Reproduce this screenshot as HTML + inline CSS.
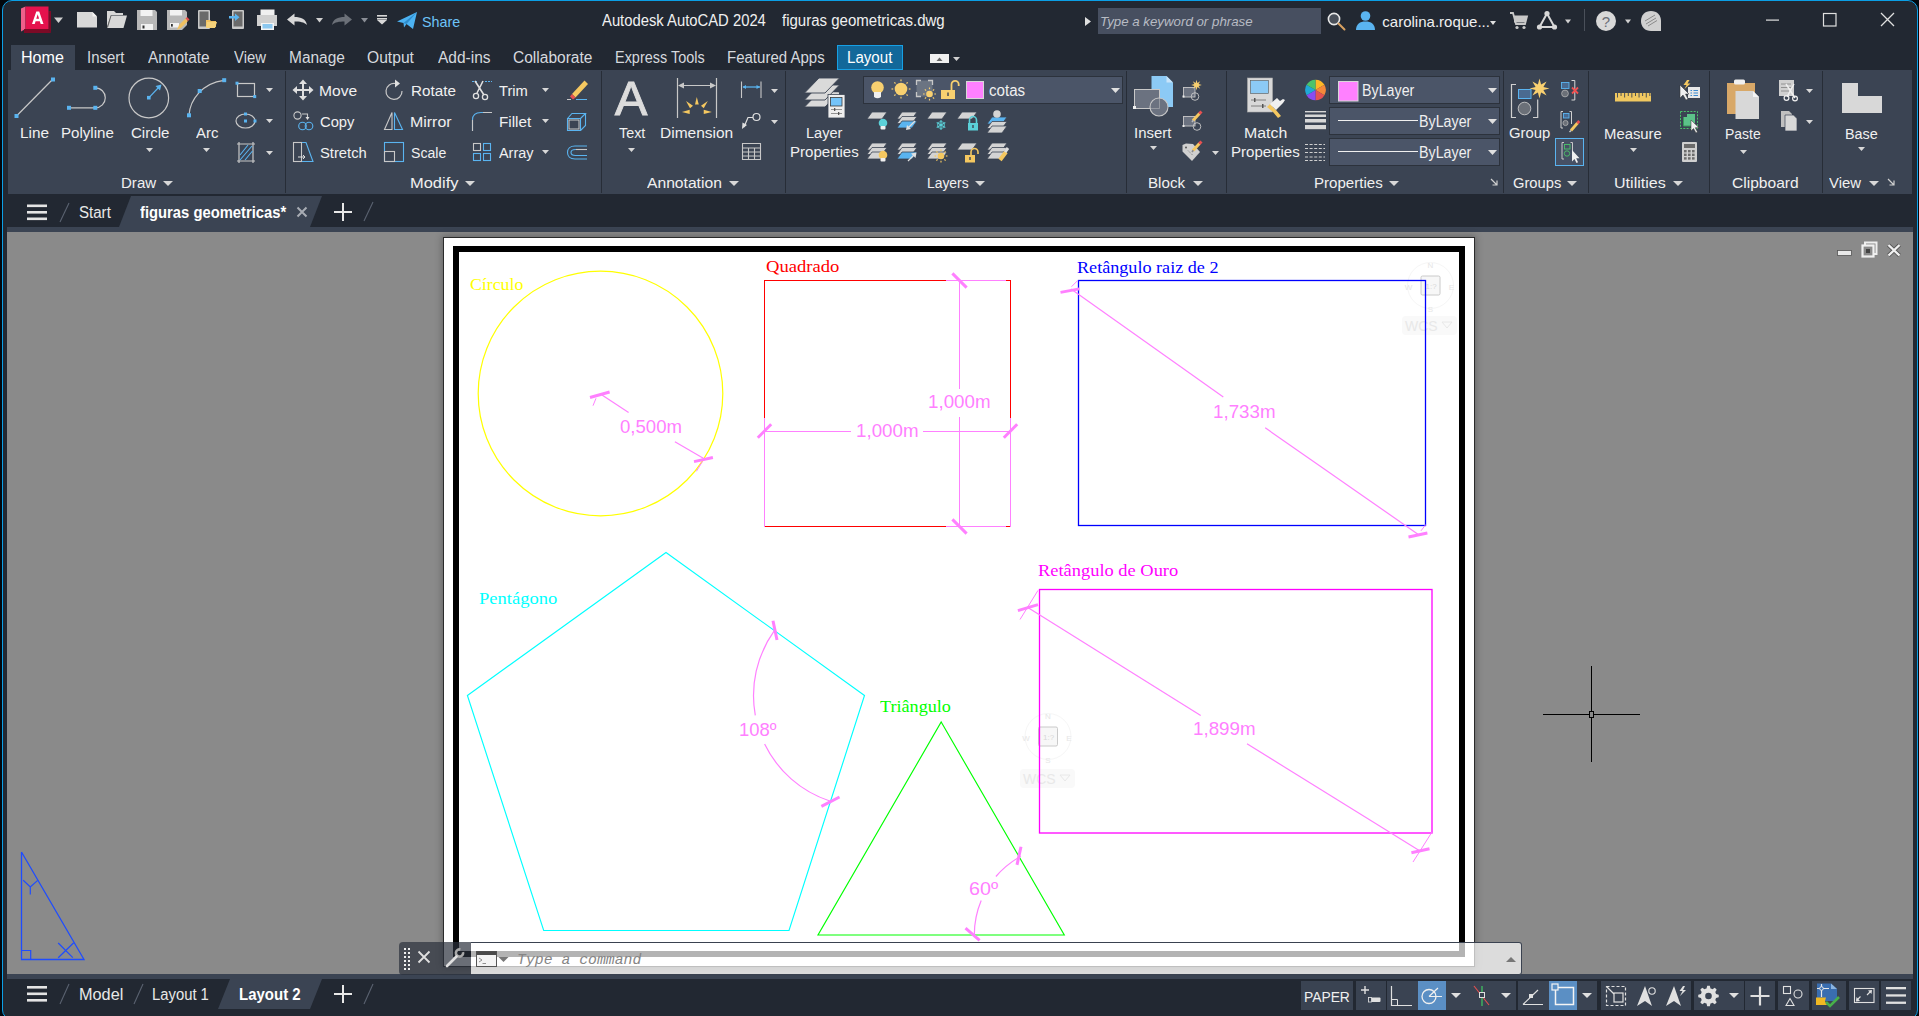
<!DOCTYPE html><html><head><meta charset="utf-8"><style>
html,body{margin:0;padding:0;width:1919px;height:1016px;overflow:hidden;background:#02070d;}
#r{position:absolute;left:0;top:0;width:1919px;height:1016px;overflow:hidden;}
</style></head><body><div id="r">
<div style="position:absolute;left:2px;top:0px;width:1914px;height:1018px;border:1px solid #0b9fe6;border-radius:10px;background:#222832;"></div>
<div style="position:absolute;left:11px;top:45px;width:64px;height:25px;background:#3b4453;"></div>
<div style="position:absolute;left:837px;top:45px;width:66px;height:25px;background:#12689a;border:1px solid #16a0e4;box-sizing:border-box;"></div>
<div style="position:absolute;left:8px;top:70px;width:1904px;height:124px;background:#3b4453;"></div>
<div style="position:absolute;left:285px;top:71px;width:1px;height:122px;background:#272d37;"></div>
<div style="position:absolute;left:601px;top:71px;width:1px;height:122px;background:#272d37;"></div>
<div style="position:absolute;left:785px;top:71px;width:1px;height:122px;background:#272d37;"></div>
<div style="position:absolute;left:1126px;top:71px;width:1px;height:122px;background:#272d37;"></div>
<div style="position:absolute;left:1226px;top:71px;width:1px;height:122px;background:#272d37;"></div>
<div style="position:absolute;left:1503px;top:71px;width:1px;height:122px;background:#272d37;"></div>
<div style="position:absolute;left:1588px;top:71px;width:1px;height:122px;background:#272d37;"></div>
<div style="position:absolute;left:1709px;top:71px;width:1px;height:122px;background:#272d37;"></div>
<div style="position:absolute;left:1822px;top:71px;width:1px;height:122px;background:#272d37;"></div>
<div style="position:absolute;left:7px;top:227px;width:1906px;height:5px;background:#3b4453;"></div>
<svg style="position:absolute;left:118px;top:196px;" width="206" height="31" viewBox="0 0 206 31"><polygon points="1,31 13,0 204,0 192,31" fill="#3b4453"/></svg>
<div style="position:absolute;left:7px;top:232px;width:1906px;height:742px;background:#8a8a8a;"></div>
<div style="position:absolute;left:7px;top:974px;width:1906px;height:5px;background:#3b4453;"></div>
<svg style="position:absolute;left:217px;top:979px;" width="106" height="30" viewBox="0 0 106 30"><polygon points="1,30 13,0 105,0 93,30" fill="#3b4453"/></svg>
<svg style="position:absolute;left:0px;top:0px;" width="1919" height="42" viewBox="0 0 1919 42"><polygon points="21,8.5 25.5,6.5 25.5,29 21,31.5" fill="#ef5f8a"/><polygon points="24,29 48.5,29 51,33 24,33" fill="#7c0a26"/><polygon points="48.5,11 51,11 51,33 48.5,29" fill="#7c0a26"/><rect x="25.5" y="6.5" width="23" height="22.5" fill="#e5124d"/><path d="M32 24 L36.3 11.5 H39.2 L43.5 24 H40.7 L39.8 21.2 H35.6 L34.7 24 Z M36.3 18.8 H39.1 L37.7 14.3 Z" fill="#fff"/><polygon points="54,17.5 63,17.5 58.5,23.0" fill="#d0d0d0"/><path d="M77 12 H92.5 L97 16.5 V27.5 H77 Z" fill="#d8d8d8"/><path d="M92.5 12 V16.5 H97" fill="#f4f4f4"/><path d="M107 11 H114 L116 13 H123 V15 H111 L107 27 Z" fill="#d8d8d8"/><path d="M110.5 15.5 H127 L123.5 28 H107 Z" fill="#d8d8d8"/><path d="M111 15.6 L107.5 27.5" stroke="#444" stroke-width="0.8"/><path d="M137 10 H155 L157 12 V30 H137 Z" fill="#b8b8b8"/><rect x="140.5" y="10" width="12" height="6" fill="#f2f2f2"/><rect x="141" y="24" width="12" height="6" fill="#f2f2f2"/><rect x="142.5" y="25.5" width="2" height="3" fill="#333"/><path d="M167 10 H185 L187 12 V25 L182 30 H167 Z" fill="#b8b8b8"/><rect x="170" y="10" width="12" height="5.5" fill="#f2f2f2"/><rect x="170" y="23" width="9" height="4.5" fill="#f2f2f2"/><rect x="171" y="24" width="1.8" height="2.6" fill="#333"/><path d="M177 30 L179 25 L185.5 18.5 L188 21 L181.5 27.5 Z" fill="#f0c060"/><path d="M185.5 18.5 L187 17 L189.5 19.5 L188 21 Z" fill="#e85050"/><rect x="198" y="10" width="12" height="19" rx="1" fill="#c8c8c8"/><rect x="199.5" y="11.5" width="9" height="15" fill="#6a6a6a"/><path d="M206 20 H210 L211 21 H216 V27 H206 Z" fill="#f0c060"/><path d="M207 22 H217 L215 28 H206 Z" fill="#f6d27a"/><rect x="232" y="10" width="12" height="19" rx="1" fill="#c8c8c8"/><rect x="233.5" y="11.5" width="9" height="15" fill="#6a6a6a"/><path d="M229 16 H235 V13.5 L239.5 17.2 L235 21 V18.5 H229 Z" fill="#5ab4f0"/><rect x="260.5" y="9.5" width="14" height="6" fill="#f0f0f0"/><path d="M257 15 H277 V26 H257 Z" fill="#d0d0d0"/><rect x="261" y="23" width="13" height="7" fill="#f4f4f4"/><rect x="262.5" y="24" width="10" height="4.5" fill="#8cc8f0"/><path d="M287 19.5 L294.5 13.5 V17 C301 17 306 19 307 25 C304 22 300 21.5 294.5 21.5 V25.5 Z" fill="#d8d8d8"/><polygon points="316,18 323,18 319.5,22.5" fill="#d0d0d0"/><path d="M352 19.5 L344.5 13.5 V17 C338 17 333 19 332 25 C335 22 339 21.5 344.5 21.5 V25.5 Z" fill="#6b7078"/><polygon points="361,18 368,18 364.5,22.5" fill="#8a8e96"/><rect x="377" y="15" width="10" height="1.6" fill="#d8d8d8"/><rect x="377" y="18" width="10" height="1.6" fill="#d8d8d8"/><polygon points="377,20 387,20 382.0,24.5" fill="#d8d8d8"/><path d="M397 21.5 L417 12 L413 29 L406.5 24 L404 27.5 L403.5 23 Z" fill="#4cb2f2"/><path d="M403.5 23 L417 12 L406.5 24 Z" fill="#2d8ccc"/><polygon points="1085,17 1091,21.5 1085,26" fill="#e0e0e0"/><rect x="1098" y="8" width="223" height="26" fill="#474f60"/><circle cx="1334" cy="19" r="5.6" fill="#4a505a" stroke="#e8e8e8" stroke-width="1.6"/><path d="M1338.5 23.5 L1344.5 29.5" stroke="#d8a060" stroke-width="2" stroke-linecap="round"/><circle cx="1365.5" cy="16" r="4.8" fill="#5ab4f0"/><path d="M1356 30 C1356 24 1360 21.5 1365.5 21.5 C1371 21.5 1375 24 1375 30 Z" fill="#5ab4f0"/><polygon points="1490,21 1496,21 1493.0,25" fill="#e0e0e0"/><path d="M1510 13 H1513 L1516 24 H1525 L1527 16.5 H1514" fill="none" stroke="#c8c8c8" stroke-width="1.8"/><rect x="1514" y="16.5" width="12" height="6" fill="#c8c8c8"/><circle cx="1517" cy="27.5" r="1.6" fill="#c8c8c8"/><circle cx="1524" cy="27.5" r="1.6" fill="#c8c8c8"/><path d="M1547 13.5 L1539.5 27 H1554.5 Z" fill="none" stroke="#d8d8d8" stroke-width="2"/><circle cx="1547" cy="13.5" r="2.6" fill="#d8d8d8"/><circle cx="1539.5" cy="27" r="2.6" fill="#d8d8d8"/><circle cx="1554.5" cy="27" r="2.6" fill="#d8d8d8"/><polygon points="1565,19.5 1571,19.5 1568.0,23.5" fill="#d0d0d0"/><rect x="1584" y="9" width="1" height="22" fill="#4a505a"/><circle cx="1606" cy="21" r="10" fill="#d8d8d8"/><text x="1606" y="27" font-family="Liberation Sans" font-size="15" font-weight="400" text-anchor="middle" fill="#6a6e76">?</text><polygon points="1625,19.5 1631,19.5 1628.0,23.5" fill="#d0d0d0"/><path d="M1651 11 C1657 11 1661 15 1661 21 V31 H1651 C1645 31 1641 27 1641 21 C1641 15 1645 11 1651 11 Z" fill="#d0d0d0"/><path d="M1645 21 L1655 15 M1646 24 L1656 18 M1648 26 L1657 20.5" stroke="#8a8a8a" stroke-width="1"/><rect x="1766" y="19.5" width="13" height="1.2" fill="#e0e0e0"/><rect x="1823.5" y="13.5" width="12.5" height="12.5" fill="none" stroke="#e0e0e0" stroke-width="1.2"/><path d="M1881 13 L1894 26 M1894 13 L1881 26" stroke="#e0e0e0" stroke-width="1.3"/></svg>
<div style="position:absolute;left:422.40px;top:13.70px;font:400 15px/15px 'Liberation Sans', sans-serif;color:#6ec4f8;white-space:pre;transform:scaleX(0.9548);transform-origin:0 0;">Share</div>
<div style="position:absolute;left:602.00px;top:12.75px;font:400 16px/16px 'Liberation Sans', sans-serif;color:#f0f0f0;white-space:pre;transform:scaleX(0.9257);transform-origin:0 0;">Autodesk AutoCAD 2024</div>
<div style="position:absolute;left:782.27px;top:12.75px;font:400 16px/16px 'Liberation Sans', sans-serif;color:#f0f0f0;white-space:pre;transform:scaleX(0.9383);transform-origin:0 0;">figuras geometricas.dwg</div>
<div style="position:absolute;left:1099.85px;top:14.79px;font:italic 400 13px/13px 'Liberation Sans', sans-serif;color:#b8bcc4;white-space:pre;transform:scaleX(1.0220);transform-origin:0 0;">Type a keyword or phrase</div>
<div style="position:absolute;left:1382.37px;top:14.10px;font:400 15px/15px 'Liberation Sans', sans-serif;color:#f0f0f0;white-space:pre;">carolina.roque...</div>
<div style="position:absolute;left:20.73px;top:49.62px;font:400 15.8px/15.8px 'Liberation Sans', sans-serif;color:#ffffff;white-space:pre;transform:scaleX(1.0186);transform-origin:0 0;">Home</div>
<div style="position:absolute;left:86.70px;top:49.62px;font:400 15.8px/15.8px 'Liberation Sans', sans-serif;color:#d6d9de;white-space:pre;transform:scaleX(0.9474);transform-origin:0 0;">Insert</div>
<div style="position:absolute;left:148.00px;top:49.62px;font:400 15.8px/15.8px 'Liberation Sans', sans-serif;color:#d6d9de;white-space:pre;transform:scaleX(0.9741);transform-origin:0 0;">Annotate</div>
<div style="position:absolute;left:234.00px;top:49.62px;font:400 15.8px/15.8px 'Liberation Sans', sans-serif;color:#d6d9de;white-space:pre;transform:scaleX(0.9446);transform-origin:0 0;">View</div>
<div style="position:absolute;left:288.78px;top:49.62px;font:400 15.8px/15.8px 'Liberation Sans', sans-serif;color:#d6d9de;white-space:pre;transform:scaleX(0.9796);transform-origin:0 0;">Manage</div>
<div style="position:absolute;left:367.26px;top:49.62px;font:400 15.8px/15.8px 'Liberation Sans', sans-serif;color:#d6d9de;white-space:pre;transform:scaleX(0.9892);transform-origin:0 0;">Output</div>
<div style="position:absolute;left:438.00px;top:49.62px;font:400 15.8px/15.8px 'Liberation Sans', sans-serif;color:#d6d9de;white-space:pre;transform:scaleX(0.9811);transform-origin:0 0;">Add-ins</div>
<div style="position:absolute;left:513.26px;top:49.62px;font:400 15.8px/15.8px 'Liberation Sans', sans-serif;color:#d6d9de;white-space:pre;transform:scaleX(0.9827);transform-origin:0 0;">Collaborate</div>
<div style="position:absolute;left:614.86px;top:49.62px;font:400 15.8px/15.8px 'Liberation Sans', sans-serif;color:#d6d9de;white-space:pre;transform:scaleX(0.9143);transform-origin:0 0;">Express Tools</div>
<div style="position:absolute;left:726.81px;top:49.62px;font:400 15.8px/15.8px 'Liberation Sans', sans-serif;color:#d6d9de;white-space:pre;transform:scaleX(0.9505);transform-origin:0 0;">Featured Apps</div>
<div style="position:absolute;left:846.80px;top:49.62px;font:400 15.8px/15.8px 'Liberation Sans', sans-serif;color:#ffffff;white-space:pre;transform:scaleX(0.9565);transform-origin:0 0;">Layout</div>
<svg style="position:absolute;left:928px;top:50px;" width="36" height="16" viewBox="0 0 36 16"><rect x="2" y="4" width="19" height="9" fill="#f0f0f0"/><polygon points="8.5,11 11.5,7.5 14.5,11" fill="#666"/><polygon points="25,7 32,7 28.5,11" fill="#d0d0d0"/></svg>
<div style="position:absolute;left:120.78px;top:174.96px;font:400 15.4px/15.4px 'Liberation Sans', sans-serif;color:#f0f0f0;white-space:pre;transform:scaleX(0.9784);transform-origin:0 0;">Draw</div>
<div style="position:absolute;left:409.66px;top:174.96px;font:400 15.4px/15.4px 'Liberation Sans', sans-serif;color:#f0f0f0;white-space:pre;transform:scaleX(1.0682);transform-origin:0 0;">Modify</div>
<div style="position:absolute;left:647.00px;top:174.96px;font:400 15.4px/15.4px 'Liberation Sans', sans-serif;color:#f0f0f0;white-space:pre;transform:scaleX(1.0172);transform-origin:0 0;">Annotation</div>
<div style="position:absolute;left:926.87px;top:174.96px;font:400 15.4px/15.4px 'Liberation Sans', sans-serif;color:#f0f0f0;white-space:pre;transform:scaleX(0.9014);transform-origin:0 0;">Layers</div>
<div style="position:absolute;left:1147.77px;top:174.96px;font:400 15.4px/15.4px 'Liberation Sans', sans-serif;color:#f0f0f0;white-space:pre;transform:scaleX(0.9863);transform-origin:0 0;">Block</div>
<div style="position:absolute;left:1313.78px;top:174.96px;font:400 15.4px/15.4px 'Liberation Sans', sans-serif;color:#f0f0f0;white-space:pre;transform:scaleX(0.9799);transform-origin:0 0;">Properties</div>
<div style="position:absolute;left:1513.28px;top:174.96px;font:400 15.4px/15.4px 'Liberation Sans', sans-serif;color:#f0f0f0;white-space:pre;transform:scaleX(0.9567);transform-origin:0 0;">Groups</div>
<div style="position:absolute;left:1613.83px;top:174.96px;font:400 15.4px/15.4px 'Liberation Sans', sans-serif;color:#f0f0f0;white-space:pre;transform:scaleX(1.0444);transform-origin:0 0;">Utilities</div>
<div style="position:absolute;left:1732.24px;top:174.96px;font:400 15.4px/15.4px 'Liberation Sans', sans-serif;color:#f0f0f0;white-space:pre;transform:scaleX(1.0117);transform-origin:0 0;">Clipboard</div>
<div style="position:absolute;left:1829.00px;top:174.96px;font:400 15.4px/15.4px 'Liberation Sans', sans-serif;color:#f0f0f0;white-space:pre;transform:scaleX(0.9660);transform-origin:0 0;">View</div>
<svg style="position:absolute;left:0px;top:0px;" width="1919" height="200" viewBox="0 0 1919 200"><polygon points="163,181 173,181 168,186" fill="#d8d8d8"/><polygon points="465,181 475,181 470,186" fill="#d8d8d8"/><polygon points="729,181 739,181 734,186" fill="#d8d8d8"/><polygon points="975,181 985,181 980,186" fill="#d8d8d8"/><polygon points="1193,181 1203,181 1198,186" fill="#d8d8d8"/><polygon points="1389,181 1399,181 1394,186" fill="#d8d8d8"/><polygon points="1567,181 1577,181 1572,186" fill="#d8d8d8"/><polygon points="1673,181 1683,181 1678,186" fill="#d8d8d8"/><polygon points="1869,181 1879,181 1874,186" fill="#d8d8d8"/><path d="M1491 179 L1497 185 M1497 180.5 V185 H1492.5" stroke="#d0d0d0" stroke-width="1.2" fill="none"/><path d="M1888 179 L1894 185 M1894 180.5 V185 H1889.5" stroke="#d0d0d0" stroke-width="1.2" fill="none"/></svg>
<div style="position:absolute;left:20.26px;top:124.96px;font:400 15.4px/15.4px 'Liberation Sans', sans-serif;color:#f0f0f0;white-space:pre;transform:scaleX(0.9954);transform-origin:0 0;">Line</div>
<div style="position:absolute;left:61.27px;top:124.96px;font:400 15.4px/15.4px 'Liberation Sans', sans-serif;color:#f0f0f0;white-space:pre;transform:scaleX(0.9808);transform-origin:0 0;">Polyline</div>
<div style="position:absolute;left:130.77px;top:124.96px;font:400 15.4px/15.4px 'Liberation Sans', sans-serif;color:#f0f0f0;white-space:pre;transform:scaleX(0.9769);transform-origin:0 0;">Circle</div>
<div style="position:absolute;left:195.50px;top:124.96px;font:400 15.4px/15.4px 'Liberation Sans', sans-serif;color:#f0f0f0;white-space:pre;transform:scaleX(0.9724);transform-origin:0 0;">Arc</div>
<div style="position:absolute;left:619.15px;top:124.96px;font:400 15.4px/15.4px 'Liberation Sans', sans-serif;color:#f0f0f0;white-space:pre;transform:scaleX(0.9327);transform-origin:0 0;">Text</div>
<div style="position:absolute;left:660.24px;top:124.96px;font:400 15.4px/15.4px 'Liberation Sans', sans-serif;color:#f0f0f0;white-space:pre;transform:scaleX(1.0071);transform-origin:0 0;">Dimension</div>
<div style="position:absolute;left:806.32px;top:124.96px;font:400 15.4px/15.4px 'Liberation Sans', sans-serif;color:#f0f0f0;white-space:pre;transform:scaleX(0.9459);transform-origin:0 0;">Layer</div>
<div style="position:absolute;left:790.28px;top:143.96px;font:400 15.4px/15.4px 'Liberation Sans', sans-serif;color:#f0f0f0;white-space:pre;transform:scaleX(0.9799);transform-origin:0 0;">Properties</div>
<div style="position:absolute;left:1134.17px;top:124.96px;font:400 15.4px/15.4px 'Liberation Sans', sans-serif;color:#f0f0f0;white-space:pre;transform:scaleX(0.9697);transform-origin:0 0;">Insert</div>
<div style="position:absolute;left:1244.21px;top:124.96px;font:400 15.4px/15.4px 'Liberation Sans', sans-serif;color:#f0f0f0;white-space:pre;transform:scaleX(1.0314);transform-origin:0 0;">Match</div>
<div style="position:absolute;left:1231.28px;top:143.96px;font:400 15.4px/15.4px 'Liberation Sans', sans-serif;color:#f0f0f0;white-space:pre;transform:scaleX(0.9799);transform-origin:0 0;">Properties</div>
<div style="position:absolute;left:1508.77px;top:124.96px;font:400 15.4px/15.4px 'Liberation Sans', sans-serif;color:#f0f0f0;white-space:pre;transform:scaleX(0.9668);transform-origin:0 0;">Group</div>
<div style="position:absolute;left:1604.29px;top:125.96px;font:400 15.4px/15.4px 'Liberation Sans', sans-serif;color:#f0f0f0;white-space:pre;transform:scaleX(0.9655);transform-origin:0 0;">Measure</div>
<div style="position:absolute;left:1725.37px;top:125.96px;font:400 15.4px/15.4px 'Liberation Sans', sans-serif;color:#f0f0f0;white-space:pre;transform:scaleX(0.9067);transform-origin:0 0;">Paste</div>
<div style="position:absolute;left:1845.33px;top:125.96px;font:400 15.4px/15.4px 'Liberation Sans', sans-serif;color:#f0f0f0;white-space:pre;transform:scaleX(0.9358);transform-origin:0 0;">Base</div>
<div style="position:absolute;left:318.73px;top:82.96px;font:400 15.4px/15.4px 'Liberation Sans', sans-serif;color:#f0f0f0;white-space:pre;transform:scaleX(1.0126);transform-origin:0 0;">Move</div>
<div style="position:absolute;left:320.18px;top:113.96px;font:400 15.4px/15.4px 'Liberation Sans', sans-serif;color:#f0f0f0;white-space:pre;transform:scaleX(0.9566);transform-origin:0 0;">Copy</div>
<div style="position:absolute;left:320.18px;top:144.96px;font:400 15.4px/15.4px 'Liberation Sans', sans-serif;color:#f0f0f0;white-space:pre;transform:scaleX(0.9592);transform-origin:0 0;">Stretch</div>
<div style="position:absolute;left:410.86px;top:82.96px;font:400 15.4px/15.4px 'Liberation Sans', sans-serif;color:#f0f0f0;white-space:pre;transform:scaleX(0.9890);transform-origin:0 0;">Rotate</div>
<div style="position:absolute;left:409.91px;top:113.96px;font:400 15.4px/15.4px 'Liberation Sans', sans-serif;color:#f0f0f0;white-space:pre;transform:scaleX(1.0348);transform-origin:0 0;">Mirror</div>
<div style="position:absolute;left:410.51px;top:144.96px;font:400 15.4px/15.4px 'Liberation Sans', sans-serif;color:#f0f0f0;white-space:pre;transform:scaleX(0.9158);transform-origin:0 0;">Scale</div>
<div style="position:absolute;left:498.84px;top:82.96px;font:400 15.4px/15.4px 'Liberation Sans', sans-serif;color:#f0f0f0;white-space:pre;transform:scaleX(0.9558);transform-origin:0 0;">Trim</div>
<div style="position:absolute;left:499.06px;top:113.96px;font:400 15.4px/15.4px 'Liberation Sans', sans-serif;color:#f0f0f0;white-space:pre;transform:scaleX(0.9888);transform-origin:0 0;">Fillet</div>
<div style="position:absolute;left:498.90px;top:144.96px;font:400 15.4px/15.4px 'Liberation Sans', sans-serif;color:#f0f0f0;white-space:pre;transform:scaleX(0.9361);transform-origin:0 0;">Array</div>
<div style="position:absolute;left:863px;top:76px;width:260px;height:28px;background:#4b5568;box-sizing:border-box;border:1px solid #2c323c;"></div>
<div style="position:absolute;left:1329px;top:76px;width:171px;height:28px;background:#4b5568;box-sizing:border-box;border:1px solid #2c323c;"></div>
<div style="position:absolute;left:1329px;top:107px;width:171px;height:28px;background:#4b5568;box-sizing:border-box;border:1px solid #2c323c;"></div>
<div style="position:absolute;left:1329px;top:138px;width:171px;height:28px;background:#4b5568;box-sizing:border-box;border:1px solid #2c323c;"></div>
<div style="position:absolute;left:1555px;top:138px;width:29px;height:28px;background:#465064;box-sizing:border-box;border:1px solid #5ab4f0;"></div>
<div style="position:absolute;left:989.40px;top:82.62px;font:400 15.8px/15.8px 'Liberation Sans', sans-serif;color:#f0f0f0;white-space:pre;transform:scaleX(0.9556);transform-origin:0 0;">cotas</div>
<div style="position:absolute;left:1361.87px;top:82.62px;font:400 15.8px/15.8px 'Liberation Sans', sans-serif;color:#f0f0f0;white-space:pre;transform:scaleX(0.9027);transform-origin:0 0;">ByLayer</div>
<div style="position:absolute;left:1418.87px;top:113.62px;font:400 15.8px/15.8px 'Liberation Sans', sans-serif;color:#f0f0f0;white-space:pre;transform:scaleX(0.9027);transform-origin:0 0;">ByLayer</div>
<div style="position:absolute;left:1418.87px;top:144.62px;font:400 15.8px/15.8px 'Liberation Sans', sans-serif;color:#f0f0f0;white-space:pre;transform:scaleX(0.9027);transform-origin:0 0;">ByLayer</div>
<svg style="position:absolute;left:0px;top:0px;" width="1919" height="200" viewBox="0 0 1919 200"><line x1="17" y1="115.5" x2="52.5" y2="79.5" stroke="#c8c8c8" stroke-width="1.2"/><rect x="14.5" y="114.0" width="4" height="4" fill="#5ab4f0"/><rect x="51.0" y="77.5" width="4" height="4" fill="#5ab4f0"/><path d="M69 107.8 H95.3 M95.3 87.8 A10 10 0 0 1 95.3 107.8" fill="none" stroke="#c8c8c8" stroke-width="1.2"/><rect x="67.0" y="105.8" width="4" height="4" fill="#5ab4f0"/><rect x="93.3" y="105.8" width="4" height="4" fill="#5ab4f0"/><rect x="93.3" y="85.8" width="4" height="4" fill="#5ab4f0"/><circle cx="148.8" cy="98" r="19.8" fill="none" stroke="#c8c8c8" stroke-width="1.2"/><line x1="149" y1="97.7" x2="159" y2="87" stroke="#5ab4f0" stroke-width="1.2"/><polygon points="161.5,84.5 155.5,86 160,90.5" fill="#5ab4f0"/><rect x="147.0" y="95.9" width="3.6" height="3.6" fill="#5ab4f0"/><path d="M189 115 C190 100 202 83 224 80.3" fill="none" stroke="#c8c8c8" stroke-width="1.2"/><rect x="187.0" y="113.3" width="4" height="4" fill="#5ab4f0"/><rect x="197.7" y="89.0" width="4" height="4" fill="#5ab4f0"/><rect x="222.2" y="78.2" width="4" height="4" fill="#5ab4f0"/><rect x="237.5" y="83.5" width="17" height="13" fill="none" stroke="#c8c8c8" stroke-width="1.2"/><rect x="235.5" y="81.7" width="3" height="3" fill="#5ab4f0"/><rect x="253.2" y="95.1" width="3" height="3" fill="#5ab4f0"/><ellipse cx="245.5" cy="121" rx="9.5" ry="7" fill="none" stroke="#c8c8c8" stroke-width="1.2"/><rect x="244.0" y="119.5" width="3" height="3" fill="#5ab4f0"/><rect x="244.0" y="112.5" width="3" height="3" fill="#5ab4f0"/><rect x="253.5" y="119.5" width="3" height="3" fill="#5ab4f0"/><path d="M237 144 H255 M237 161 H255 M239 142 V163 M253 142 V163" stroke="#c8c8c8" stroke-width="1.2"/><path d="M240 155 L248 145 M240 160 L252 146 M245 160 L252.5 151" stroke="#5ab4f0" stroke-width="1.1"/><polygon points="266,88 273,88 269.5,92" fill="#d8d8d8"/><polygon points="266,119 273,119 269.5,123" fill="#d8d8d8"/><polygon points="266,151 273,151 269.5,155" fill="#d8d8d8"/><polygon points="146,148 153,148 149.5,152" fill="#d8d8d8"/><polygon points="203,148 210,148 206.5,152" fill="#d8d8d8"/><path d="M303 81 V99 M294 90 H312" stroke="#e0e0e0" stroke-width="2"/><polygon points="303,79.5 299,84 307,84" fill="#e0e0e0"/><polygon points="303,100.5 299,96 307,96" fill="#e0e0e0"/><polygon points="292.5,90 297,86 297,94" fill="#e0e0e0"/><polygon points="313.5,90 309,86 309,94" fill="#e0e0e0"/><path d="M395.5 83.5 A8 8 0 1 0 402 91" fill="none" stroke="#c8c8c8" stroke-width="1.2"/><polygon points="395,79.5 400,83.5 395,87.5" fill="#e0e0e0"/><path d="M472 81.5 H477 M485 81.5 H492" stroke="#5ab4f0" stroke-width="1" stroke-dasharray="2 1"/><path d="M475 81 L484 95 M483 81 L477 93" stroke="#e0e0e0" stroke-width="1.6"/><circle cx="476" cy="96" r="2.6" fill="none" stroke="#e0e0e0" stroke-width="1.3"/><circle cx="485" cy="97" r="2.6" fill="none" stroke="#e0e0e0" stroke-width="1.3"/><circle cx="297.5" cy="115.5" r="3.6" fill="none" stroke="#c8c8c8" stroke-width="1.1"/><path d="M302 114 H307.5 V118" fill="none" stroke="#c8c8c8" stroke-width="1.1"/><polygon points="305.5,117 309.5,117 307.5,120" fill="#e0e0e0"/><circle cx="302.5" cy="126" r="3.8" fill="none" stroke="#5ab4f0" stroke-width="1.1"/><circle cx="309" cy="126" r="3.8" fill="none" stroke="#5ab4f0" stroke-width="1.1"/><path d="M384.5 129.5 L392 112.5 V129.5 Z" fill="none" stroke="#c8c8c8" stroke-width="1.1"/><path d="M394.5 129.5 V112.5 L402.5 129.5 Z" fill="none" stroke="#5ab4f0" stroke-width="1.1"/><path d="M472.5 131 V120 C472.5 115 476 112.5 481 112.5 H492" fill="none" stroke="#5ab4f0" stroke-width="1.1"/><path d="M472.5 131 V120 M483 112.5 H492" stroke="#c8c8c8" stroke-width="1.1"/><rect x="293.5" y="142.5" width="8" height="19" fill="none" stroke="#c8c8c8" stroke-width="1.1"/><path d="M302 142.5 H306 L313 161.5 H302" fill="none" stroke="#5ab4f0" stroke-width="1.1"/><path d="M298 157 H305 M303 155 L305 157 L303 159" fill="none" stroke="#e0e0e0" stroke-width="1"/><rect x="384.5" y="142.5" width="19" height="19" fill="none" stroke="#5ab4f0" stroke-width="1.1"/><rect x="384.5" y="151.5" width="10" height="10" fill="none" stroke="#c8c8c8" stroke-width="1.1"/><rect x="473.5" y="143.5" width="7" height="7" fill="none" stroke="#c8c8c8" stroke-width="1.1"/><rect x="483.5" y="143.5" width="7" height="7" fill="none" stroke="#5ab4f0" stroke-width="1.1"/><rect x="473.5" y="153.5" width="7" height="7" fill="none" stroke="#5ab4f0" stroke-width="1.1"/><rect x="483.5" y="153.5" width="7" height="7" fill="none" stroke="#5ab4f0" stroke-width="1.1"/><polygon points="542,88 549,88 545.5,92" fill="#d8d8d8"/><polygon points="542,119 549,119 545.5,123" fill="#d8d8d8"/><polygon points="542,150 549,150 545.5,154" fill="#d8d8d8"/><path d="M572 94 L584.5 80.5 L588 84 L575.5 97.5 Z" fill="#f5c860"/><path d="M572 94 L575.5 97.5 L573 99.5 L570 96.5 Z" fill="#e85050"/><path d="M567 99.5 H571 M576 99.5 H587" stroke="#5ab4f0" stroke-width="1"/><path d="M567 99.5 H571" stroke="#c8c8c8" stroke-width="1"/><path d="M567.5 118.5 H580.5 V130.5 H567.5 Z M567.5 118.5 L572 113.5 H585.5 L580.5 118.5 M585.5 113.5 V125.5 L580.5 130.5" fill="none" stroke="#5ab4f0" stroke-width="1.1"/><rect x="569" y="120" width="10" height="9" fill="none" stroke="#c8c8c8" stroke-width="1"/><path d="M587 146 H575 C570 146 567.5 149 567.5 152.5 C567.5 156 570 159 575 159 H587 M587 149.5 H575.5 C572.5 149.5 571 151 571 152.5 C571 154 572.5 155.5 575.5 155.5 H587" fill="none" stroke="#5ab4f0" stroke-width="1.1"/><path d="M587 149.5 H576" stroke="#c8c8c8" stroke-width="1.1"/><text x="631.2" y="115.2" font-family="Liberation Sans" font-size="49" text-anchor="middle" fill="#dcdcdc" stroke="#dcdcdc" stroke-width="0.9">A</text><path d="M677.5 78 V118 M716.5 78 V118 M679 85.5 H715" stroke="#c8c8c8" stroke-width="1.2"/><polygon points="678,85.5 684,82.5 684,88.5" fill="#c8c8c8"/><polygon points="716,85.5 710,82.5 710,88.5" fill="#c8c8c8"/><polygon points="695,104.5 698.75,104.5 696.75,97" fill="#f5c860"/><polygon points="686,101 690,108.25 693,105.75" fill="#f5c860"/><polygon points="707.8,101 701,105.75 703.75,108.25" fill="#f5c860"/><polygon points="681.9,112 689.7,109.8 689.7,113.9" fill="#f5c860"/><polygon points="711.9,112 703.75,109.8 703.75,113.9" fill="#f5c860"/><path d="M741.5 81.5 V98 M761 81.5 V98" stroke="#c8c8c8" stroke-width="1.1"/><path d="M743 87 H760" stroke="#5ab4f0" stroke-width="1.3"/><polygon points="742.5,87 746,85 746,89" fill="#5ab4f0"/><polygon points="760,87 756.5,85 756.5,89" fill="#5ab4f0"/><circle cx="756.5" cy="117" r="3.5" fill="none" stroke="#e0e0e0" stroke-width="1.2"/><path d="M753 117.5 L748 117.5 L744 127" stroke="#e0e0e0" stroke-width="1.2" fill="none"/><polygon points="742,129 742.5,122.5 747,125" fill="#e0e0e0"/><path d="M742.5 143.5 H760.5 V159.5 H742.5 Z M742.5 148 H760.5 M742.5 152 H760.5 M742.5 156 H760.5 M748.5 148 V159.5 M754.5 148 V159.5" fill="none" stroke="#c8c8c8" stroke-width="1.1"/><polygon points="771,89 778,89 774.5,93" fill="#d8d8d8"/><polygon points="771,120 778,120 774.5,124" fill="#d8d8d8"/><polygon points="628,148 635,148 631.5,152" fill="#d8d8d8"/></svg>
<svg style="position:absolute;left:0px;top:0px;" width="1919" height="200" viewBox="0 0 1919 200"><polygon points="819,92 839.5,92 825,107 804.5,107" fill="#dadada" stroke="#3b4453" stroke-width="0.9"/><polygon points="819,85 839.5,85 825,100 804.5,100" fill="#dadada" stroke="#3b4453" stroke-width="0.9"/><polygon points="819,78 839.5,78 825,93 804.5,93" fill="#dadada" stroke="#3b4453" stroke-width="0.9"/><rect x="833" y="92.5" width="6" height="2.5" fill="#dadada"/><rect x="828" y="94.5" width="17" height="23.5" fill="#eeeeee" stroke="#3b4453" stroke-width="0.8"/><rect x="830.5" y="97.5" width="11.5" height="8.5" fill="#74c4fa" stroke="#3a3a3a" stroke-width="0.8"/><path d="M831 109.5 H842 M831 113.5 H842" stroke="#7a7a7a" stroke-width="0.8"/><rect x="834" y="108" width="1.3" height="3" fill="#555"/><rect x="838" y="112" width="1.3" height="3" fill="#555"/><circle cx="877.5" cy="87.5" r="6.3" fill="#f8d070"/><path d="M874 92 H881 V97 Q877.5 99.5 874 97 Z" fill="#f0f0f0"/><circle cx="901" cy="89" r="6.3" fill="#f8d070"/><line x1="908.8" y1="89.0" x2="910.5" y2="89.0" stroke="#f8d070" stroke-width="1.2"/><line x1="906.5" y1="94.5" x2="907.7" y2="95.7" stroke="#f8d070" stroke-width="1.2"/><line x1="901.0" y1="96.8" x2="901.0" y2="98.5" stroke="#f8d070" stroke-width="1.2"/><line x1="895.5" y1="94.5" x2="894.3" y2="95.7" stroke="#f8d070" stroke-width="1.2"/><line x1="893.2" y1="89.0" x2="891.5" y2="89.0" stroke="#f8d070" stroke-width="1.2"/><line x1="895.5" y1="83.5" x2="894.3" y2="82.3" stroke="#f8d070" stroke-width="1.2"/><line x1="901.0" y1="81.2" x2="901.0" y2="79.5" stroke="#f8d070" stroke-width="1.2"/><line x1="906.5" y1="83.5" x2="907.7" y2="82.3" stroke="#f8d070" stroke-width="1.2"/><rect x="916.5" y="80.5" width="16" height="16" fill="#6b7482"/><path d="M916.5 85 V80.5 H921 M928 80.5 H932.5 V85 M916.5 92 V96.5 H921" fill="none" stroke="#c8c8c8" stroke-width="1.3"/><circle cx="929.5" cy="94" r="3.3" fill="#f8d070"/><line x1="934.3" y1="94.0" x2="936.0" y2="94.0" stroke="#f8d070" stroke-width="1.2"/><line x1="932.9" y1="97.4" x2="934.1" y2="98.6" stroke="#f8d070" stroke-width="1.2"/><line x1="929.5" y1="98.8" x2="929.5" y2="100.5" stroke="#f8d070" stroke-width="1.2"/><line x1="926.1" y1="97.4" x2="924.9" y2="98.6" stroke="#f8d070" stroke-width="1.2"/><line x1="924.7" y1="94.0" x2="923.0" y2="94.0" stroke="#f8d070" stroke-width="1.2"/><line x1="926.1" y1="90.6" x2="924.9" y2="89.4" stroke="#f8d070" stroke-width="1.2"/><line x1="929.5" y1="89.2" x2="929.5" y2="87.5" stroke="#f8d070" stroke-width="1.2"/><line x1="932.9" y1="90.6" x2="934.1" y2="89.4" stroke="#f8d070" stroke-width="1.2"/><rect x="941" y="90" width="14" height="9" fill="#f8d070"/><rect x="947.3" y="92.5" width="1.4" height="3.5" fill="#3b4453"/><path d="M951.5 90 V84.5 A3.6 3.6 0 0 1 958.7 84.5 V86" fill="none" stroke="#f8d070" stroke-width="1.8"/><rect x="966.5" y="81.5" width="17" height="17" fill="#ff80ff" stroke="#d8d8d8" stroke-width="1"/><polygon points="1111,88 1120,88 1115.5,93" fill="#e0e0e0"/><polygon points="872,112 887,112 882,119 867,119" fill="#d4d4d4" stroke="#3b4453" stroke-width="0.8"/><circle cx="883" cy="123" r="4.3" fill="#5bd0d8"/><rect x="880.5" y="126" width="5" height="3.5" rx="1" fill="#f0f0f0"/><polygon points="902,112.0 917,112.0 912,119.0 897,119.0" fill="#d4d4d4" stroke="#3b4453" stroke-width="0.8"/><polygon points="902,116.5 917,116.5 912,123.5 897,123.5" fill="#d4d4d4" stroke="#3b4453" stroke-width="0.8"/><polygon points="902,121.0 917,121.0 912,128.0 897,128.0" fill="#5ab4f0" stroke="#3b4453" stroke-width="0.8"/><path d="M915 121 L908 128" stroke="#e0e0e0" stroke-width="1.2"/><polygon points="906,130 907,125 911,129" fill="#e0e0e0"/><polygon points="932,112 947,112 942,119 927,119" fill="#d4d4d4" stroke="#3b4453" stroke-width="0.8"/><g stroke="#5bd0d8" stroke-width="1.1"><path d="M941 120 V130 M936.7 122.5 L945.3 127.5 M945.3 122.5 L936.7 127.5"/></g><circle cx="941" cy="125" r="3.5" fill="none" stroke="#5bd0d8" stroke-width="0.8"/><polygon points="962,112 977,112 972,119 957,119" fill="#d4d4d4" stroke="#3b4453" stroke-width="0.8"/><path d="M969.5 123 V120 A3.5 3.5 0 0 1 976.5 120 V123" fill="none" stroke="#5bd0d8" stroke-width="1.6"/><rect x="968" y="123" width="10" height="7.5" fill="#5bd0d8"/><rect x="972.3" y="125" width="1.4" height="3" fill="#3b4453"/><polygon points="992,117.0 1007,117.0 1002,124.0 987,124.0" fill="#5ab4f0" stroke="#3b4453" stroke-width="0.8"/><polygon points="992,121.5 1007,121.5 1002,128.5 987,128.5" fill="#d4d4d4" stroke="#3b4453" stroke-width="0.8"/><polygon points="992,126.0 1007,126.0 1002,133.0 987,133.0" fill="#d4d4d4" stroke="#3b4453" stroke-width="0.8"/><circle cx="997" cy="114" r="3.8" fill="#d4d4d4"/><polygon points="872,143.0 887,143.0 882,150.0 867,150.0" fill="#d4d4d4" stroke="#3b4453" stroke-width="0.8"/><polygon points="872,147.5 887,147.5 882,154.5 867,154.5" fill="#d4d4d4" stroke="#3b4453" stroke-width="0.8"/><polygon points="872,152.0 887,152.0 882,159.0 867,159.0" fill="#d4d4d4" stroke="#3b4453" stroke-width="0.8"/><circle cx="883" cy="155" r="4.3" fill="#f5c860"/><rect x="880.5" y="158" width="5" height="3.5" rx="1" fill="#f0f0f0"/><polygon points="902,143.0 917,143.0 912,150.0 897,150.0" fill="#d4d4d4" stroke="#3b4453" stroke-width="0.8"/><polygon points="902,147.5 917,147.5 912,154.5 897,154.5" fill="#d4d4d4" stroke="#3b4453" stroke-width="0.8"/><polygon points="902,152.0 917,152.0 912,159.0 897,159.0" fill="#5ab4f0" stroke="#3b4453" stroke-width="0.8"/><path d="M908 161 L915 154" stroke="#e0e0e0" stroke-width="1.2"/><polygon points="916.5,152.5 911,153.5 915.5,158" fill="#e0e0e0"/><polygon points="932,143.0 947,143.0 942,150.0 927,150.0" fill="#d4d4d4" stroke="#3b4453" stroke-width="0.8"/><polygon points="932,147.5 947,147.5 942,154.5 927,154.5" fill="#d4d4d4" stroke="#3b4453" stroke-width="0.8"/><polygon points="932,152.0 947,152.0 942,159.0 927,159.0" fill="#d4d4d4" stroke="#3b4453" stroke-width="0.8"/><circle cx="941" cy="156" r="3.3" fill="#f5c860"/><line x1="945.8" y1="156.0" x2="947.5" y2="156.0" stroke="#f5c860" stroke-width="1.2"/><line x1="944.4" y1="159.4" x2="945.6" y2="160.6" stroke="#f5c860" stroke-width="1.2"/><line x1="941.0" y1="160.8" x2="941.0" y2="162.5" stroke="#f5c860" stroke-width="1.2"/><line x1="937.6" y1="159.4" x2="936.4" y2="160.6" stroke="#f5c860" stroke-width="1.2"/><line x1="936.2" y1="156.0" x2="934.5" y2="156.0" stroke="#f5c860" stroke-width="1.2"/><line x1="937.6" y1="152.6" x2="936.4" y2="151.4" stroke="#f5c860" stroke-width="1.2"/><line x1="941.0" y1="151.2" x2="941.0" y2="149.5" stroke="#f5c860" stroke-width="1.2"/><line x1="944.4" y1="152.6" x2="945.6" y2="151.4" stroke="#f5c860" stroke-width="1.2"/><polygon points="962,143 977,143 972,150 957,150" fill="#d4d4d4" stroke="#3b4453" stroke-width="0.8"/><path d="M971 155 V152 A3.5 3.5 0 0 1 978 152 V154" fill="none" stroke="#f5c860" stroke-width="1.6"/><rect x="965" y="155" width="10" height="7.5" fill="#f5c860"/><rect x="969.3" y="157" width="1.4" height="3" fill="#3b4453"/><polygon points="992,143.0 1007,143.0 1002,150.0 987,150.0" fill="#d4d4d4" stroke="#3b4453" stroke-width="0.8"/><polygon points="992,147.5 1007,147.5 1002,154.5 987,154.5" fill="#d4d4d4" stroke="#3b4453" stroke-width="0.8"/><polygon points="992,152.0 1007,152.0 1002,159.0 987,159.0" fill="#d4d4d4" stroke="#3b4453" stroke-width="0.8"/><path d="M1000 160 L1006 152" stroke="#f5c860" stroke-width="4"/><path d="M1005 152 L1008 148" stroke="#e0e0e0" stroke-width="3"/><path d="M1151.5 76 H1166.5 L1173 82.5 V107 H1151.5 Z" fill="#8ccaf5"/><path d="M1166.5 76 V82.5 H1173 Z" fill="#c8e4fa"/><rect x="1134.5" y="89.5" width="25" height="19" fill="#6b7280" stroke="#c8c8c8" stroke-width="1"/><circle cx="1159" cy="107" r="9" fill="#6b7280" stroke="#c8c8c8" stroke-width="1.1"/><path d="M1159.5 98 V108.5 H1150" fill="none" stroke="rgba(200,200,200,0.45)" stroke-width="1"/><rect x="1133" y="106" width="3" height="3" fill="#f0f0f0"/><rect x="1183.5" y="87.5" width="11.5" height="9.5" fill="#6b7280" stroke="#c8c8c8" stroke-width="0.9"/><circle cx="1195" cy="96.5" r="3.8" fill="none" stroke="#c8c8c8" stroke-width="0.9"/><rect x="1182.5" y="95.5" width="2" height="2" fill="#eee"/><polygon points="1196.5,79.7 1197.4,82.9 1200.2,81.3 1198.6,84.1 1201.8,85.0 1198.6,85.9 1200.2,88.7 1197.4,87.1 1196.5,90.3 1195.6,87.1 1192.8,88.7 1194.4,85.9 1191.2,85.0 1194.4,84.1 1192.8,81.3 1195.6,82.9" fill="#f8d070"/><rect x="1183.5" y="116.5" width="11.5" height="9.5" fill="#6b7280" stroke="#c8c8c8" stroke-width="0.9"/><circle cx="1197" cy="126.5" r="3.8" fill="none" stroke="#c8c8c8" stroke-width="0.9"/><rect x="1182.5" y="125" width="2" height="2" fill="#eee"/><path d="M1193 120.5 L1199.5 113.5" stroke="#f5c860" stroke-width="3"/><path d="M1199.3 113.7 L1201.5 111.5" stroke="#e85050" stroke-width="3"/><path d="M1192 122 L1193.3 120.3" stroke="#bbb" stroke-width="1.6"/><path d="M1182.5 145 L1186 143.5 L1193 144 L1200 152 L1192 161 L1182.5 151.5 Z" fill="#d0d0d0"/><circle cx="1186" cy="147.5" r="1" fill="#555"/><path d="M1188 150.5 L1193 155.5" stroke="#777" stroke-width="0.8" stroke-dasharray="1.5 1"/><path d="M1193 150.5 L1199.5 143.5" stroke="#f5c860" stroke-width="3"/><path d="M1199.3 143.7 L1201.5 141.5" stroke="#e85050" stroke-width="3"/><path d="M1192 152 L1193.3 150.3" stroke="#888" stroke-width="1.6"/><polygon points="1212,151 1219,151 1215.5,155" fill="#d8d8d8"/><polygon points="1150,146 1157,146 1153.5,150" fill="#d8d8d8"/><rect x="1247.5" y="78" width="25" height="34" fill="#d8d8d8" stroke="#aaa" stroke-width="0.6"/><rect x="1250.5" y="80.5" width="18" height="13" fill="#8ccaf5" stroke="#555" stroke-width="0.6"/><path d="M1251 100 H1266 M1251 106 H1266" stroke="#777" stroke-width="0.9"/><rect x="1254" y="98" width="1.5" height="4" fill="#555"/><rect x="1262" y="104" width="1.5" height="4" fill="#555"/><path d="M1267 107 L1273 112 L1278 118 L1281 116 L1276 110 L1270 104 Z" fill="#f5c860"/><path d="M1270 104 L1276 110 L1283 103 L1285 100 L1283 99 L1280 101 L1277 98 Z" fill="#f0f0f0"/><path d="M1315.5 90 L1315.50 79.70 A10.3 10.3 0 0 1 1324.42 84.85 Z" fill="#fdb827"/><path d="M1315.5 90 L1324.42 84.85 A10.3 10.3 0 0 1 1324.42 95.15 Z" fill="#f5893a"/><path d="M1315.5 90 L1324.42 95.15 A10.3 10.3 0 0 1 1315.50 100.30 Z" fill="#e55252"/><path d="M1315.5 90 L1315.50 100.30 A10.3 10.3 0 0 1 1306.58 95.15 Z" fill="#8a4cf0"/><path d="M1315.5 90 L1306.58 95.15 A10.3 10.3 0 0 1 1306.58 84.85 Z" fill="#20a9d6"/><path d="M1315.5 90 L1306.58 84.85 A10.3 10.3 0 0 1 1315.50 79.70 Z" fill="#4cc36a"/><rect x="1305" y="111" width="21" height="1.4" fill="#d8d8d8"/><rect x="1305" y="114.5" width="21" height="2.5" fill="#d8d8d8"/><rect x="1305" y="119" width="21" height="3.5" fill="#d8d8d8"/><rect x="1305" y="125" width="21" height="4.2" fill="#d8d8d8"/><path d="M1305 144.5 H1325 M1305 148.5 H1325 M1305 152.5 H1325 M1305 157 H1325 M1305 160.5 H1325" stroke="#d0d0d0" stroke-width="1.1" stroke-dasharray="3 1.6"/><rect x="1338.5" y="81.5" width="19.5" height="19.5" fill="#ff80ff" stroke="#d8d8d8" stroke-width="1"/><rect x="1338" y="120" width="80" height="1" fill="#f0f0f0"/><rect x="1338" y="151" width="80" height="1" fill="#f0f0f0"/><polygon points="1488,88 1497,88 1492.5,93" fill="#e0e0e0"/><polygon points="1488,119 1497,119 1492.5,124" fill="#e0e0e0"/><polygon points="1488,150 1497,150 1492.5,155" fill="#e0e0e0"/><path d="M1516 84.5 H1511.5 V117.5 H1516 M1533 117.5 H1537.7 V99.5" fill="none" stroke="#d0d0d0" stroke-width="1.2"/><rect x="1518.5" y="89.5" width="12.5" height="9" fill="#4a6a90" stroke="#5ab4f0" stroke-width="1"/><circle cx="1524.5" cy="108.5" r="6.3" fill="#6b7078" stroke="#c8c8c8" stroke-width="0.9"/><polygon points="1539.5,78.5 1541.1,84.6 1546.6,81.4 1543.4,86.9 1549.5,88.5 1543.4,90.1 1546.6,95.6 1541.1,92.4 1539.5,98.5 1537.9,92.4 1532.4,95.6 1535.6,90.1 1529.5,88.5 1535.6,86.9 1532.4,81.4 1537.9,84.6" fill="#f8d070"/><path d="M1571.5 80.5 H1574.8 V100 H1571.5" fill="none" stroke="#d8d8d8" stroke-width="1"/><rect x="1561.5" y="82.5" width="7.5" height="6" fill="#4a6a90" stroke="#5ab4f0" stroke-width="0.9"/><circle cx="1565" cy="93.5" r="3.4" fill="#6b7078" stroke="#bbb" stroke-width="0.7"/><path d="M1572 87.5 L1578 93.5 M1578 87.5 L1572 93.5" stroke="#f05050" stroke-width="1.8"/><path d="M1563 111.5 H1561 V128 H1563 M1569.5 111.5 H1571.5 V124" fill="none" stroke="#d0d0d0" stroke-width="1"/><rect x="1563.5" y="113.5" width="5.5" height="4.5" fill="#4a6a90" stroke="#5ab4f0" stroke-width="0.9"/><circle cx="1565.5" cy="123" r="2.6" fill="#6b7078" stroke="#bbb" stroke-width="0.7"/><path d="M1571 130.5 L1577.5 123" stroke="#f5c860" stroke-width="2.8"/><path d="M1577.3 123.2 L1579.3 121" stroke="#e85050" stroke-width="2.8"/><path d="M1569.5 132 L1571 130.5" stroke="#ccc" stroke-width="1.5"/><path d="M1564 142.5 H1562 V159 H1564 M1570.5 142.5 H1572.5 V151" fill="none" stroke="#c8c8c8" stroke-width="1"/><rect x="1564.5" y="144.5" width="5.5" height="4.5" fill="none" stroke="#4cc36a" stroke-width="0.9"/><circle cx="1567" cy="153.5" r="2.7" fill="none" stroke="#4cc36a" stroke-width="0.9"/><path d="M1572 150 V161.5 L1574.5 159 L1576.5 163 L1578 162.2 L1576.2 158.3 H1579.5 Z" fill="#f0f0f0"/><rect x="1615" y="93" width="36" height="8.5" fill="#f0c860"/><rect x="1617.0" y="93" width="0.9" height="4.5" fill="#3b4453"/><rect x="1620.6" y="93" width="0.9" height="3" fill="#3b4453"/><rect x="1624.2" y="93" width="0.9" height="4.5" fill="#3b4453"/><rect x="1627.8" y="93" width="0.9" height="3" fill="#3b4453"/><rect x="1631.4" y="93" width="0.9" height="4.5" fill="#3b4453"/><rect x="1635.0" y="93" width="0.9" height="3" fill="#3b4453"/><rect x="1638.6" y="93" width="0.9" height="4.5" fill="#3b4453"/><rect x="1642.2" y="93" width="0.9" height="3" fill="#3b4453"/><rect x="1645.8" y="93" width="0.9" height="4.5" fill="#3b4453"/><rect x="1649.4" y="93" width="0.9" height="3" fill="#3b4453"/><rect x="1688" y="87" width="12" height="11" fill="#e8e8e8"/><path d="M1690.5 90.5 H1692 M1693.5 90.5 H1698 M1690.5 93 H1692 M1693.5 93 H1698 M1690.5 95.5 H1692 M1693.5 95.5 H1698" stroke="#3a8ad0" stroke-width="1"/><path d="M1680 85 V98 L1683 95 L1686 100 L1688 99 L1685.5 94 H1689 Z" fill="#f0f0f0" stroke="#333" stroke-width="0.5"/><path d="M1687 80 L1683.5 85 H1686.5 L1684.5 89 L1690.5 83.5 H1687.5 L1689.5 80 Z" fill="#f5c860"/><rect x="1680.5" y="111.5" width="17" height="17" fill="none" stroke="#4cc36a" stroke-width="1" stroke-dasharray="2 1.3"/><path d="M1683.5 117 H1687 V114 H1695 V123 H1692 V126 H1683.5 Z" fill="#5cc389"/><path d="M1683.5 117 V126 H1692" fill="none" stroke="#3b9a5a" stroke-width="1"/><path d="M1691 120 V131 L1693.5 128.5 L1696 133 L1697.5 132 L1695.3 127.7 H1699 Z" fill="#f0f0f0" stroke="#333" stroke-width="0.5"/><rect x="1682" y="142" width="15" height="20" rx="1" fill="#d0d0d0"/><rect x="1684" y="144" width="11" height="4" fill="#6b6b6b"/><rect x="1684" y="150.0" width="2.6" height="2.4" fill="#6b6b6b"/><rect x="1688" y="150.0" width="2.6" height="2.4" fill="#6b6b6b"/><rect x="1692" y="150.0" width="2.6" height="2.4" fill="#6b6b6b"/><rect x="1684" y="153.6" width="2.6" height="2.4" fill="#6b6b6b"/><rect x="1688" y="153.6" width="2.6" height="2.4" fill="#6b6b6b"/><rect x="1692" y="153.6" width="2.6" height="2.4" fill="#6b6b6b"/><rect x="1684" y="157.2" width="2.6" height="2.4" fill="#6b6b6b"/><rect x="1688" y="157.2" width="2.6" height="2.4" fill="#6b6b6b"/><rect x="1692" y="157.2" width="2.6" height="2.4" fill="#6b6b6b"/><polygon points="1630,148 1637,148 1633.5,152" fill="#d8d8d8"/><rect x="1727" y="83" width="28" height="31" fill="#d8a868"/><rect x="1734" y="79.5" width="11" height="5" rx="1.5" fill="#f0f0f0"/><path d="M1735.5 91 H1753 L1759 97 V119 H1735.5 Z" fill="#d8d8d8"/><path d="M1753 91 V97 H1759" fill="#f4f4f4"/><rect x="1779" y="80" width="15" height="16" fill="#d0d0d0"/><path d="M1781 84 H1791 M1781 87.5 H1791 M1781 91 H1789" stroke="#8a8a8a" stroke-width="0.9"/><path d="M1786 84 L1795 98 M1794 84 L1787 97" stroke="#f0f0f0" stroke-width="1.4"/><circle cx="1786.5" cy="98" r="2.4" fill="none" stroke="#f0f0f0" stroke-width="1.2"/><circle cx="1795" cy="98.5" r="2.4" fill="none" stroke="#f0f0f0" stroke-width="1.2"/><path d="M1781 111 H1789 L1792 114 V127 H1781 Z" fill="#c0c0c0"/><path d="M1785 115 H1793.5 L1797 118.5 V131 H1785 Z" fill="#d8d8d8" stroke="#3b4453" stroke-width="0.7"/><polygon points="1806,89 1813,89 1809.5,93" fill="#d8d8d8"/><polygon points="1806,120 1813,120 1809.5,124" fill="#d8d8d8"/><polygon points="1740,150 1747,150 1743.5,154" fill="#d8d8d8"/><path d="M1842 83 H1858 V96 H1882 V113 H1842 Z" fill="#d8d8d8"/><polygon points="1858,147 1865,147 1861.5,151" fill="#d8d8d8"/></svg>
<svg style="position:absolute;left:0px;top:0px;" width="1919" height="1016" viewBox="0 0 1919 1016"><rect x="27" y="204.5" width="20" height="2.6" fill="#e4e4e4"/><rect x="27" y="211" width="20" height="2.6" fill="#e4e4e4"/><rect x="27" y="217.5" width="20" height="2.6" fill="#e4e4e4"/><path d="M60 222 L69 203" stroke="#5a6270" stroke-width="1.1"/><path d="M297.5 207.5 L306.5 216.5 M306.5 207.5 L297.5 216.5" stroke="#a8acb4" stroke-width="2"/><path d="M343 203 V221 M334 212 H352" stroke="#e8e8e8" stroke-width="2"/><path d="M364 221 L373 202" stroke="#5a6270" stroke-width="1.1"/><rect x="27" y="986" width="20" height="2.6" fill="#e4e4e4"/><rect x="27" y="992.5" width="20" height="2.6" fill="#e4e4e4"/><rect x="27" y="999" width="20" height="2.6" fill="#e4e4e4"/><path d="M60 1004 L69 984" stroke="#5a6270" stroke-width="1.1"/><path d="M134 1004 L143 984" stroke="#5a6270" stroke-width="1.1"/><path d="M343 985 V1003 M334 994 H352" stroke="#e8e8e8" stroke-width="2"/><path d="M364 1004 L373 984" stroke="#5a6270" stroke-width="1.1"/></svg>
<div style="position:absolute;left:78.78px;top:204.62px;font:400 15.8px/15.8px 'Liberation Sans', sans-serif;color:#e8e8e8;white-space:pre;transform:scaleX(0.9538);transform-origin:0 0;">Start</div>
<div style="position:absolute;left:139.77px;top:204.62px;font:700 15.8px/15.8px 'Liberation Sans', sans-serif;color:#ffffff;white-space:pre;transform:scaleX(0.9359);transform-origin:0 0;">figuras geometricas*</div>
<div style="position:absolute;left:79.11px;top:986.62px;font:400 15.8px/15.8px 'Liberation Sans', sans-serif;color:#e8e8e8;white-space:pre;transform:scaleX(1.0307);transform-origin:0 0;">Model</div>
<div style="position:absolute;left:151.83px;top:986.62px;font:400 15.8px/15.8px 'Liberation Sans', sans-serif;color:#e8e8e8;white-space:pre;transform:scaleX(0.9382);transform-origin:0 0;">Layout 1</div>
<div style="position:absolute;left:239.05px;top:986.62px;font:700 15.8px/15.8px 'Liberation Sans', sans-serif;color:#ffffff;white-space:pre;transform:scaleX(0.9486);transform-origin:0 0;">Layout 2</div>
<div style="position:absolute;left:443px;top:237px;width:1032px;height:730px;background:#fff;box-sizing:border-box;border:1px solid #2a2a2a;box-shadow:0 0 7px 1px rgba(0,0,0,0.28);"></div>
<div style="position:absolute;left:453px;top:246px;width:1012px;height:711px;box-sizing:border-box;border:6px solid #000;"></div>
<svg style="position:absolute;left:0px;top:0px;" width="1919" height="1016" viewBox="0 0 1919 1016"><circle cx="1430.5" cy="285.5" r="23" fill="none" stroke="#f6f6f6" stroke-width="1"/><rect x="1421.0" y="276.0" width="19" height="19" rx="1.5" fill="#f7f7f7" stroke="#c4c4c4" stroke-width="0.9"/><text x="1425.5" y="288.5" font-family="Liberation Sans" font-size="8" fill="#d8d8d8">1:?</text><text x="1430.5" y="267.5" font-family="Liberation Sans" font-size="8" text-anchor="middle" fill="#e6e6e6">N</text><text x="1451.5" y="289.5" font-family="Liberation Sans" font-size="8" text-anchor="middle" fill="#e6e6e6">E</text><text x="1430.5" y="311.5" font-family="Liberation Sans" font-size="8" text-anchor="middle" fill="#e6e6e6">S</text><text x="1408.5" y="289.5" font-family="Liberation Sans" font-size="8" text-anchor="middle" fill="#e6e6e6">W</text><rect x="1402" y="316" width="55" height="19" rx="4" fill="#f9f9f9"/><text x="1405" y="331" font-family="Liberation Sans" font-size="14" fill="#e8e8e8">WCS</text><path d="M1442 322 H1452 L1447 328 Z" fill="none" stroke="#e8e8e8" stroke-width="1"/><circle cx="1048" cy="736.5" r="23" fill="none" stroke="#f6f6f6" stroke-width="1"/><rect x="1038.5" y="727.0" width="19" height="19" rx="1.5" fill="#f7f7f7" stroke="#c4c4c4" stroke-width="0.9"/><text x="1043" y="739.5" font-family="Liberation Sans" font-size="8" fill="#d8d8d8">1:?</text><text x="1048" y="718.5" font-family="Liberation Sans" font-size="8" text-anchor="middle" fill="#e6e6e6">N</text><text x="1069" y="740.5" font-family="Liberation Sans" font-size="8" text-anchor="middle" fill="#e6e6e6">E</text><text x="1048" y="762.5" font-family="Liberation Sans" font-size="8" text-anchor="middle" fill="#e6e6e6">S</text><text x="1026" y="740.5" font-family="Liberation Sans" font-size="8" text-anchor="middle" fill="#e6e6e6">W</text><rect x="1020" y="769" width="55" height="19" rx="4" fill="#f9f9f9"/><text x="1023" y="784" font-family="Liberation Sans" font-size="14" fill="#e8e8e8">WCS</text><path d="M1060 775 H1070 L1065 781 Z" fill="none" stroke="#e8e8e8" stroke-width="1"/></svg>
<svg style="position:absolute;left:0px;top:0px;" width="1919" height="1016" viewBox="0 0 1919 1016"><circle cx="600.5" cy="393.5" r="122.3" fill="none" stroke="#ffff00" stroke-width="1.2"/><line x1="602" y1="395" x2="628.6" y2="412.6" stroke="#ff80ff" stroke-width="1.2" /><line x1="674.9" y1="441.8" x2="704.6" y2="458.9" stroke="#ff80ff" stroke-width="1.2" /><line x1="590" y1="397.5" x2="609.6" y2="392" stroke="#ff80ff" stroke-width="3" /><line x1="596" y1="398.3" x2="593" y2="405.7" stroke="#ff80ff" stroke-width="1" /><line x1="694" y1="461.6" x2="712.9" y2="457.5" stroke="#ff80ff" stroke-width="3" /><line x1="702.4" y1="461.6" x2="696.4" y2="471.3" stroke="#ff80ff" stroke-width="1" /><path d="M764.5 418 V280.5 H946 M1006 280.5 H1010.5 V418 M764.5 526.5 H946 M1006 526.5 H1010.5" fill="none" stroke="#ff0000" stroke-width="1" shape-rendering="crispEdges"/><path d="M946 280.5 H1006 M946 526.5 H1006 M764.5 418 V526.5 M1010.5 418 V526.5" fill="none" stroke="#ff80ff" stroke-width="1" shape-rendering="crispEdges"/><path d="M764 431.5 H851 M923 431.5 H1010 M959.5 280 V389 M959.5 417 V526" fill="none" stroke="#ff80ff" stroke-width="1" shape-rendering="crispEdges"/><line x1="757.8" y1="437.7" x2="771.2" y2="424.3" stroke="#ff80ff" stroke-width="3" /><line x1="1003.8" y1="437.7" x2="1017.2" y2="424.3" stroke="#ff80ff" stroke-width="3" /><line x1="952.4" y1="273.4" x2="966.6" y2="287.6" stroke="#ff80ff" stroke-width="3" /><line x1="952.4" y1="519.4" x2="966.6" y2="533.6" stroke="#ff80ff" stroke-width="3" /><rect x="1078.5" y="280.5" width="347" height="245" fill="none" stroke="#0000ff" stroke-width="1.3"/><line x1="1071" y1="289" x2="1223.3" y2="396.9" stroke="#ff80ff" stroke-width="1.2" /><line x1="1265.2" y1="427.8" x2="1419" y2="535" stroke="#ff80ff" stroke-width="1.2" /><line x1="1060.5" y1="292.4" x2="1079.4" y2="288.9" stroke="#ff80ff" stroke-width="3" /><line x1="1071.5" y1="286.7" x2="1077.8" y2="280.4" stroke="#ff80ff" stroke-width="1" /><line x1="1408.5" y1="537" x2="1427.4" y2="533" stroke="#ff80ff" stroke-width="3" /><line x1="1421" y1="530.8" x2="1425.8" y2="524.5" stroke="#ff80ff" stroke-width="1" /><polygon points="666,552.5 864.5,695.5 789,930.5 543.7,930.5 467.4,695.5" fill="none" stroke="#00ffff" stroke-width="1.15"/><path d="M774.2 630.9 A111 111 0 0 0 755.3 715.3" fill="none" stroke="#ff80ff" stroke-width="1.2"/><path d="M764.6 744.0 A111 111 0 0 0 829.8 801.0" fill="none" stroke="#ff80ff" stroke-width="1.2"/><line x1="773" y1="620.7" x2="777" y2="640" stroke="#ff80ff" stroke-width="3" /><line x1="821.4" y1="806.3" x2="839.5" y2="797" stroke="#ff80ff" stroke-width="3" /><polygon points="941.2,722 1064.3,935 818,935" fill="none" stroke="#00ff00" stroke-width="1.15"/><path d="M1020.7 856.3 A90 90 0 0 0 995.9 876.5" fill="none" stroke="#ff80ff" stroke-width="1.2"/><path d="M981.2 900.6 A90 90 0 0 0 974.3 935.0" fill="none" stroke="#ff80ff" stroke-width="1.2"/><line x1="1021" y1="846.7" x2="1017" y2="864.9" stroke="#ff80ff" stroke-width="3" /><line x1="965.5" y1="928.2" x2="979.6" y2="940.3" stroke="#ff80ff" stroke-width="3" /><rect x="1039.5" y="589.5" width="392.5" height="243.5" fill="none" stroke="#ff00ff" stroke-width="1.3"/><line x1="1027" y1="607" x2="1200.7" y2="715.5" stroke="#ff80ff" stroke-width="1.2" /><line x1="1247" y1="743.8" x2="1420" y2="851" stroke="#ff80ff" stroke-width="1.2" /><line x1="1017.9" y1="610.6" x2="1038" y2="604.6" stroke="#ff80ff" stroke-width="3" /><line x1="1020" y1="619.5" x2="1038" y2="590.4" stroke="#ff80ff" stroke-width="1" /><line x1="1411.4" y1="852.7" x2="1429.5" y2="848.7" stroke="#ff80ff" stroke-width="3" /><line x1="1413" y1="862" x2="1432" y2="832" stroke="#ff80ff" stroke-width="1" /><path d="M21.5 852 V959.5 H84 L21.5 852" fill="none" stroke="#1e4cff" stroke-width="1.3"/> <path d="M21.5 950.5 H30.7 V959.5" fill="none" stroke="#1e4cff" stroke-width="1.2"/><path d="M58.2 943 L72.8 957.7 M58.2 957.7 L73.7 942.8" fill="none" stroke="#1e4cff" stroke-width="1.2"/><path d="M23.2 880.2 L30.3 886.9 L37.7 880.4 M30.3 886.9 V894.6" fill="none" stroke="#1e4cff" stroke-width="1.2"/><path d="M1543 714.5 H1589 M1594 714.5 H1640 M1591.5 666 V711 M1591.5 718 V762" stroke="#000" stroke-width="1" shape-rendering="crispEdges"/><rect x="1589.5" y="711.5" width="4" height="6" fill="none" stroke="#000" stroke-width="1" shape-rendering="crispEdges"/></svg>
<div style="position:absolute;left:470.35px;top:275.76px;font:400 17px/17px 'Liberation Serif', serif;color:#ffff00;white-space:pre;transform:scaleX(1.0452);transform-origin:0 0;">Círculo</div>
<div style="position:absolute;left:766.32px;top:257.76px;font:400 17px/17px 'Liberation Serif', serif;color:#ff0000;white-space:pre;transform:scaleX(1.0951);transform-origin:0 0;">Quadrado</div>
<div style="position:absolute;left:1077.47px;top:259.26px;font:400 17px/17px 'Liberation Serif', serif;color:#0000ff;white-space:pre;transform:scaleX(1.0667);transform-origin:0 0;">Retângulo raiz de 2</div>
<div style="position:absolute;left:479.45px;top:590.36px;font:400 17px/17px 'Liberation Serif', serif;color:#00ffff;white-space:pre;transform:scaleX(1.0903);transform-origin:0 0;">Pentágono</div>
<div style="position:absolute;left:879.73px;top:698.46px;font:400 17px/17px 'Liberation Serif', serif;color:#00ff00;white-space:pre;transform:scaleX(1.0667);transform-origin:0 0;">Triângulo</div>
<div style="position:absolute;left:1038.46px;top:562.06px;font:400 17px/17px 'Liberation Serif', serif;color:#ff00ff;white-space:pre;transform:scaleX(1.0838);transform-origin:0 0;">Retângulo de Ouro</div>
<div style="position:absolute;left:620.27px;top:416.91px;font:400 19px/19px 'Liberation Sans', sans-serif;color:#ff80ff;white-space:pre;transform:scaleX(0.9776);transform-origin:0 0;">0,500m</div>
<div style="position:absolute;left:855.64px;top:420.91px;font:400 19px/19px 'Liberation Sans', sans-serif;color:#ff80ff;white-space:pre;transform:scaleX(0.9877);transform-origin:0 0;">1,000m</div>
<div style="position:absolute;left:927.64px;top:391.91px;font:400 19px/19px 'Liberation Sans', sans-serif;color:#ff80ff;white-space:pre;transform:scaleX(0.9877);transform-origin:0 0;">1,000m</div>
<div style="position:absolute;left:1212.64px;top:401.91px;font:400 19px/19px 'Liberation Sans', sans-serif;color:#ff80ff;white-space:pre;transform:scaleX(0.9877);transform-origin:0 0;">1,733m</div>
<div style="position:absolute;left:738.67px;top:719.91px;font:400 19px/19px 'Liberation Sans', sans-serif;color:#ff80ff;white-space:pre;transform:scaleX(0.9697);transform-origin:0 0;">108º</div>
<div style="position:absolute;left:969.09px;top:878.91px;font:400 19px/19px 'Liberation Sans', sans-serif;color:#ff80ff;white-space:pre;transform:scaleX(1.0370);transform-origin:0 0;">60º</div>
<div style="position:absolute;left:1192.64px;top:718.91px;font:400 19px/19px 'Liberation Sans', sans-serif;color:#ff80ff;white-space:pre;transform:scaleX(0.9877);transform-origin:0 0;">1,899m</div>
<div style="position:absolute;left:1301px;top:981px;width:52px;height:29px;background:#3a4352;"></div>
<div style="position:absolute;left:1356px;top:981px;width:30px;height:29px;background:#3a4352;"></div>
<div style="position:absolute;left:1387px;top:981px;width:129px;height:29px;background:#3a4352;"></div>
<div style="position:absolute;left:1518px;top:981px;width:79px;height:29px;background:#3a4352;"></div>
<div style="position:absolute;left:1601px;top:981px;width:90px;height:29px;background:#3a4352;"></div>
<div style="position:absolute;left:1694px;top:981px;width:50px;height:29px;background:#3a4352;"></div>
<div style="position:absolute;left:1745px;top:981px;width:30px;height:29px;background:#3a4352;"></div>
<div style="position:absolute;left:1778px;top:981px;width:31px;height:29px;background:#3a4352;"></div>
<div style="position:absolute;left:1812px;top:981px;width:34px;height:29px;background:#3a4352;"></div>
<div style="position:absolute;left:1849px;top:981px;width:30px;height:29px;background:#3a4352;"></div>
<div style="position:absolute;left:1881px;top:981px;width:30px;height:29px;background:#3a4352;"></div>
<div style="position:absolute;left:1418px;top:981px;width:28px;height:29px;background:#5b8fc4;"></div>
<div style="position:absolute;left:1549px;top:981px;width:28px;height:29px;background:#5b8fc4;"></div>
<svg style="position:absolute;left:0px;top:0px;" width="1919" height="1016" viewBox="0 0 1919 1016"><path d="M1361 990 H1369 M1365 986 V994" stroke="#e0e0e0" stroke-width="1.4"/><rect x="1368.5" y="997.5" width="12" height="4.5" rx="1" fill="#e0e0e0"/><rect x="1368.5" y="997.5" width="3" height="4.5" fill="#3a4352" stroke="#e0e0e0" stroke-width="0.8"/><path d="M1391.5 986 V1005.5 H1412" fill="none" stroke="#e0e0e0" stroke-width="1.2"/><path d="M1391.5 999.5 H1397.5 V1005.5" fill="none" stroke="#e0e0e0" stroke-width="1"/><circle cx="1429" cy="996.5" r="7" fill="none" stroke="#f0f0f0" stroke-width="1.3"/><path d="M1429 996.5 H1442 M1429 996.5 L1438 988" stroke="#f0f0f0" stroke-width="1.2"/><polygon points="1451,993 1461,993 1456.0,998" fill="#e0e0e0"/><path d="M1482 986 V1006" stroke="#40c060" stroke-width="1.3"/><path d="M1474 986 L1489 1005" stroke="#e05050" stroke-width="1.2"/><rect x="1479.5" y="992.5" width="5" height="5" fill="#3a4352" stroke="#e0e0e0" stroke-width="1"/><polygon points="1501,993 1511,993 1506.0,998" fill="#e0e0e0"/><path d="M1523 1004.5 H1543 M1523 1004.5 L1538 990" stroke="#e0e0e0" stroke-width="1.2"/><rect x="1529" y="994" width="4" height="4" fill="#e0e0e0"/><rect x="1555.5" y="987.5" width="18" height="17" fill="none" stroke="#f4f4f4" stroke-width="1.5"/><rect x="1552" y="984" width="6" height="6" fill="#5b8fc4" stroke="#f4f4f4" stroke-width="1.2"/><polygon points="1582,993 1592,993 1587.0,998" fill="#e0e0e0"/><rect x="1606.5" y="986.5" width="19" height="19" fill="none" stroke="#e0e0e0" stroke-width="1.2" stroke-dasharray="3 2"/><rect x="1614" y="993" width="9" height="9" fill="none" stroke="#e0e0e0" stroke-width="1.2"/><path d="M1607 987 L1614 994" stroke="#e0e0e0" stroke-width="1.2"/><path d="M1645 986 L1637 1006 L1645 1001 L1652 1006 Z" fill="#e0e0e0"/><circle cx="1652" cy="991" r="3.2" fill="none" stroke="#e0e0e0" stroke-width="1.1"/><path d="M1674 986 L1666 1006 L1674 1001 L1681 1006 Z" fill="#e0e0e0"/><path d="M1683 986 L1679.5 991 H1682.5 L1680 996 L1686 990 H1683 L1685 986 Z" fill="#e0e0e0"/><polygon points="1718.8,996.0 1718.7,997.3 1716.0,998.0 1715.7,999.0 1715.3,999.9 1716.7,1002.3 1715.8,1003.3 1714.8,1004.2 1712.4,1002.8 1711.5,1003.2 1710.5,1003.5 1709.8,1006.2 1708.5,1006.3 1707.2,1006.2 1706.5,1003.5 1705.5,1003.2 1704.6,1002.8 1702.2,1004.2 1701.2,1003.3 1700.3,1002.3 1701.7,999.9 1701.3,999.0 1701.0,998.0 1698.3,997.3 1698.2,996.0 1698.3,994.7 1701.0,994.0 1701.3,993.0 1701.7,992.1 1700.3,989.7 1701.2,988.7 1702.2,987.8 1704.6,989.2 1705.5,988.8 1706.5,988.5 1707.2,985.8 1708.5,985.7 1709.8,985.8 1710.5,988.5 1711.5,988.8 1712.4,989.2 1714.8,987.8 1715.8,988.7 1716.7,989.7 1715.3,992.1 1715.7,993.0 1716.0,994.0 1718.7,994.7" fill="#e0e0e0"/><circle cx="1708.5" cy="996" r="3.3" fill="#3a4352"/><polygon points="1729,993 1739,993 1734.0,998" fill="#e0e0e0"/><path d="M1760 986.5 V1005.5 M1750.5 996 H1769.5" stroke="#e0e0e0" stroke-width="2.2"/><rect x="1783.5" y="986.5" width="7" height="7" fill="none" stroke="#e0e0e0" stroke-width="1.1"/><circle cx="1798" cy="994" r="4" fill="none" stroke="#e0e0e0" stroke-width="1.1"/><path d="M1786 1005.5 L1790 998.5 L1794 1005.5 Z" fill="none" stroke="#e0e0e0" stroke-width="1.1"/><path d="M1817 983.5 H1831 L1837 989 V1001 H1817 Z" fill="#3a6eb0"/><path d="M1831 983.5 L1837 989 H1831 Z" fill="#8ab4e0"/><path d="M1817 988.5 H1829 M1821.5 984 V997" stroke="#e8e8e8" stroke-width="1.2"/><circle cx="1821.5" cy="988.5" r="1.8" fill="#3a6eb0" stroke="#e8e8e8" stroke-width="1"/><path d="M1816 997.5 H1826 L1825 1001 L1827 1005 H1816 Z" fill="#f0b823"/><path d="M1826 1002 L1830 1006 L1839 997" fill="none" stroke="#48b04a" stroke-width="2.6"/><rect x="1854.5" y="988.5" width="19.5" height="14" fill="none" stroke="#e0e0e0" stroke-width="1.1"/><path d="M1867 995 L1871 991 M1856.5 1000.5 L1860.5 996.5" stroke="#e0e0e0" stroke-width="1.1"/><polygon points="1872,990 1868,990.5 1871.5,994" fill="#e0e0e0"/><polygon points="1856,1001.5 1856.5,997 1860,1001" fill="#e0e0e0"/><rect x="1886" y="987" width="20" height="2.3" fill="#e0e0e0"/><rect x="1886" y="994.3" width="20" height="2.3" fill="#e0e0e0"/><rect x="1886" y="1001.6" width="20" height="2.3" fill="#e0e0e0"/></svg>
<div style="position:absolute;left:1303.85px;top:989.30px;font:400 15px/15px 'Liberation Sans', sans-serif;color:#f0f0f0;white-space:pre;transform:scaleX(0.9215);transform-origin:0 0;">PAPER</div>
<svg style="position:absolute;left:0px;top:0px;" width="1919" height="1016" viewBox="0 0 1919 1016"><rect x="1837.5" y="250.5" width="14" height="5" fill="#e8e8e8" stroke="#555" stroke-width="0.8"/><rect x="1865" y="242.5" width="11.5" height="11.5" fill="none" stroke="#eee" stroke-width="2"/><rect x="1862.5" y="245.5" width="11" height="11" fill="#8a8a8a" stroke="#f0f0f0" stroke-width="2.2"/><rect x="1866" y="249" width="4" height="4" fill="#444"/><path d="M1888.5 245 L1899.5 255.5 M1899.5 245 L1888.5 255.5" stroke="#555" stroke-width="4"/><path d="M1888.5 245 L1899.5 255.5 M1899.5 245 L1888.5 255.5" stroke="#f0f0f0" stroke-width="2.4"/></svg>
<div style="position:absolute;left:399px;top:942px;width:72px;height:33px;background:rgba(43,49,60,0.70);border-radius:4px 0 0 4px;"></div>
<div style="position:absolute;left:471px;top:942px;width:1051px;height:33px;box-sizing:border-box;background:rgba(255,255,255,0.70);border:1px solid #3a4250;border-left:none;border-radius:0 3px 3px 0;"></div>
<svg style="position:absolute;left:0px;top:0px;" width="1919" height="1016" viewBox="0 0 1919 1016"><rect x="404" y="948" width="2" height="2" fill="#f0f0f0"/><rect x="408" y="948" width="2" height="2" fill="#f0f0f0"/><rect x="404" y="952" width="2" height="2" fill="#f0f0f0"/><rect x="408" y="952" width="2" height="2" fill="#f0f0f0"/><rect x="404" y="956" width="2" height="2" fill="#f0f0f0"/><rect x="408" y="956" width="2" height="2" fill="#f0f0f0"/><rect x="404" y="960" width="2" height="2" fill="#f0f0f0"/><rect x="408" y="960" width="2" height="2" fill="#f0f0f0"/><rect x="404" y="964" width="2" height="2" fill="#f0f0f0"/><rect x="408" y="964" width="2" height="2" fill="#f0f0f0"/><rect x="404" y="968" width="2" height="2" fill="#f0f0f0"/><rect x="408" y="968" width="2" height="2" fill="#f0f0f0"/><path d="M418.5 951.5 L429.5 962.5 M429.5 951.5 L418.5 962.5" stroke="#e0e0e0" stroke-width="1.8"/><path d="M462.98 952.07 A3.6 3.6 0 1 1 460.43 949.52" fill="none" stroke="#a8a8a8" stroke-width="2.6"/><path d="M447 966 L456.5 956.5" stroke="#e0e0e0" stroke-width="2.6" stroke-linecap="round"/><rect x="476.5" y="951.5" width="20" height="15" fill="#f4f4f4" stroke="#555" stroke-width="1"/><rect x="476.5" y="951.5" width="20" height="3.5" fill="#4a4a4a"/><path d="M479 958 L482 960 L479 962 M482.5 963.5 H486" fill="none" stroke="#777" stroke-width="0.8"/><polygon points="498.5,957 508.5,957 503.5,962" fill="#777"/><polygon points="1506,962 1516,962 1511,957" fill="#777"/></svg>
<div style="position:absolute;left:516.60px;top:953.39px;font:italic 400 14.5px/14.5px 'Liberation Mono', monospace;color:#858585;white-space:pre;transform:scaleX(1.0207);transform-origin:0 0;">Type a command</div>
</div></body></html>
